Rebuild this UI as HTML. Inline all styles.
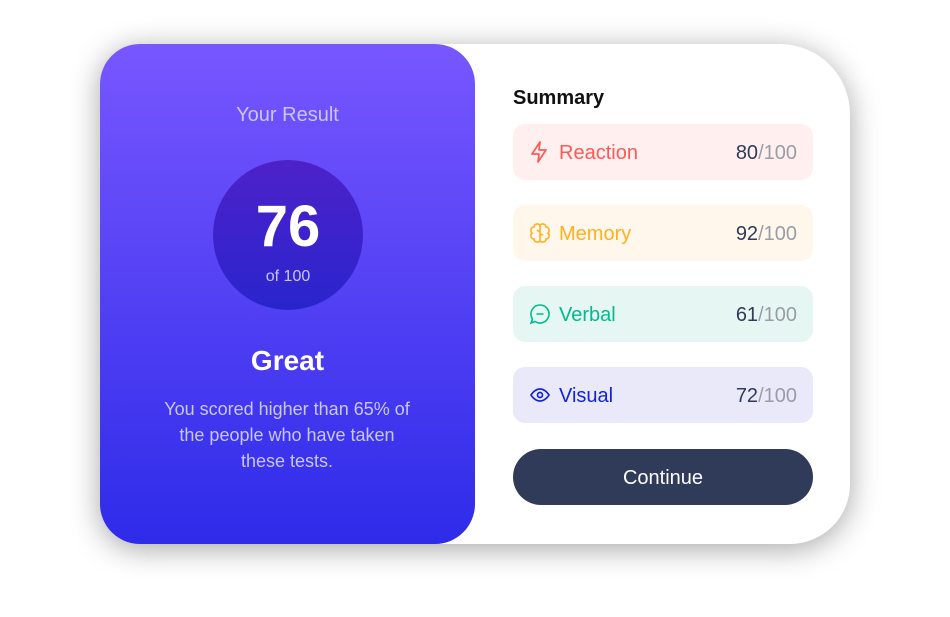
<!DOCTYPE html>
<html><head><style>
body{margin:0;width:950px;height:617px;background:#fff;font-family:"Liberation Sans",sans-serif;position:relative;overflow:hidden}
.card{position:absolute;left:100px;top:44px;width:750px;height:500px;background:#fff;border-radius:40px 70px 60px 40px;box-shadow:0 5px 30px rgba(0,0,0,.35)}
.left{position:absolute;left:0;top:0;width:375px;height:500px;border-radius:40px;background:linear-gradient(#7857ff,#2e2be9);text-align:center;color:#fff}
.yr{position:absolute;top:60px;width:100%;font-size:20px;color:#c8c7ff}
.circle{position:absolute;left:113px;top:116px;width:150px;height:150px;border-radius:50%;background:linear-gradient(#4d21c9,rgba(37,33,201,.9))}
.n{position:absolute;top:33px;width:100%;font-size:58px;font-weight:bold}
.of{position:absolute;top:108px;width:100%;font-size:16px;color:#c8c7ff}
.gr{position:absolute;top:301px;width:100%;font-size:28px;font-weight:bold}
.p{position:absolute;top:352px;left:58px;width:258px;font-size:18px;line-height:26px;color:#c8c7ff}
.sum{position:absolute;left:413px;top:43px;font-size:20px;font-weight:bold;color:#111}
.row{position:absolute;left:413px;width:300px;height:56px;border-radius:12px;font-size:20px}
.row svg{position:absolute;left:16px;top:17px}
.row .l{position:absolute;left:46px;top:18px}
.row .r{position:absolute;right:16px;top:18px;color:#303b59}
.row .r span{color:#9a9ca6}
.btn{position:absolute;left:413px;top:405px;width:300px;height:56px;border-radius:28px;background:#303b5a;color:#fff;font-size:20px;text-align:center;line-height:58px}
</style></head><body>
<div class="card">
<div class="left">
<div class="yr">Your Result</div>
<div class="circle"><div class="n">76</div><div class="of">of 100</div></div>
<div class="gr">Great</div>
<div class="p">You scored higher than 65% of the people who have taken these tests.</div>
</div>
<div class="sum">Summary</div>
<div class="row" style="top:80px;background:#fff0ef"><svg width="20" height="22" viewBox="0 0 20 22" fill="none" stroke="#ff5757" stroke-width="1.7" stroke-linejoin="round"><path d="M11 1 3 13h7l-1 8 8-12h-7z"/></svg><span class="l" style="color:#ff5757">Reaction</span><span class="r">80<span>/100</span></span></div>
<div class="row" style="top:161px;background:#fff7eb"><svg width="22" height="22" viewBox="0 0 22 22" fill="none" stroke="#ffb01f" stroke-width="1.6"><path d="M11 3c-2-2-6-1-6 2-3 0-4 4-2 6-2 2-1 6 2 6 0 3 4 4 6 2 2 2 6 1 6-2 3 0 4-4 2-6 2-2 1-6-2-6 0-3-4-4-6-2zM11 3v16M8 8l3 2M14 13l-3-1"/></svg><span class="l" style="color:#ffb01f">Memory</span><span class="r">92<span>/100</span></span></div>
<div class="row" style="top:242px;background:#e6f7f3"><svg width="22" height="22" viewBox="0 0 22 22" fill="none" stroke="#00bb8f" stroke-width="1.6"><path d="M11 2a9 9 0 1 1-5 16.5L2 20l1.5-4A9 9 0 0 1 11 2zM7.5 11h7"/></svg><span class="l" style="color:#00bb8f">Verbal</span><span class="r">61<span>/100</span></span></div>
<div class="row" style="top:323px;background:#e9e9fa"><svg width="22" height="22" viewBox="0 0 22 22" fill="none" stroke="#1125d6" stroke-width="1.7"><path d="M2 11s3.5-6 9-6 9 6 9 6-3.5 6-9 6-9-6-9-6z"/><circle cx="11" cy="11" r="2.5"/></svg><span class="l" style="color:#1125d6">Visual</span><span class="r">72<span>/100</span></span></div>
<div class="btn">Continue</div>
</div>
</body></html>
